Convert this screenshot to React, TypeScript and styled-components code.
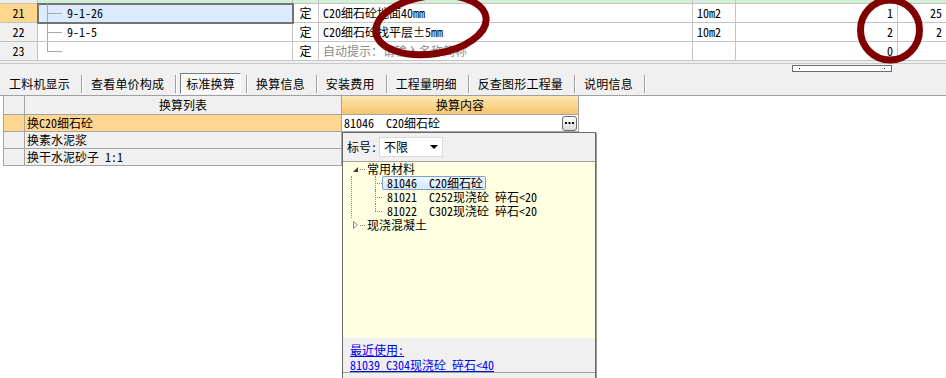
import styled, { createGlobalStyle, css } from "styled-components";

const FONT = `"Noto Sans Mono CJK SC", "Noto Sans CJK SC", "Liberation Mono", monospace`;

const GlobalStyle = createGlobalStyle`
    html, body {
        margin: 0;
        padding: 0;
    }
    body {
        font-family: ${FONT};
        font-size: 12px;
        line-height: 14px;
        color: #000000;
        background: #f0f0f0;
        overflow: hidden;
    }
    * {
        box-sizing: border-box;
    }
`;

const Page = styled.div`
    position: relative;
    width: 946px;
    height: 378px;
    overflow: hidden;
    display: flex;
    flex-direction: column;
    background: #f0f0f0;
`;

/* ---------- top grid ---------- */
const Grid = styled.div`
    display: grid;
    grid-template-columns: 38px 255px 26px 374px 43px 162px 49px;
    background: #ffffff;
`;

const StubCell = styled.div<{ $num?: boolean }>`
    height: 4px;
    border-right: 1px solid #c4c4c4;
    border-bottom: 1px solid #c4c4c4;
    background: ${(p) => (p.$num ? "#ececec" : "#d3f0d6")};
`;

const Cell = styled.div<{
    $align?: "left" | "center" | "right";
    $muted?: boolean;
}>`
    height: 19px;
    padding: 0 4px;
    display: flex;
    align-items: center;
    justify-content: ${(p) =>
        p.$align === "center" ? "center" : p.$align === "right" ? "flex-end" : "flex-start"};
    border-right: 1px solid #c4c4c4;
    border-bottom: 1px solid #c4c4c4;
    white-space: pre;
    overflow: hidden;
    color: ${(p) => (p.$muted ? "#8a8a8a" : "#000000")};
`;

const NumCell = styled(Cell)<{ $active?: boolean }>`
    justify-content: center;
    background: ${(p) => (p.$active ? "#ffd68c" : "#f0f0f0")};
`;

const CodeCell = styled(Cell)<{ $selected?: boolean }>`
    position: relative;
    ${(p) =>
        p.$selected &&
        css`
            background: #dcebfd;
            outline: 2px solid #737373;
            outline-offset: -1px;
            z-index: 1;
        `}
`;

const Branch = styled.span<{ $last?: boolean }>`
    position: relative;
    align-self: stretch;
    flex: none;
    width: 15px;
    margin: 0 5px 0 5px;
    &::before {
        content: "";
        position: absolute;
        left: 0;
        top: -1px;
        bottom: ${(p) => (p.$last ? "50%" : "-1px")};
        border-left: 1px solid #a8a8a8;
    }
    &::after {
        content: "";
        position: absolute;
        left: 0;
        right: 0;
        top: 50%;
        border-top: 1px solid #a8a8a8;
    }
`;

/* ---------- scroll strip ---------- */
const ScrollStrip = styled.div`
    padding-top: 2px;
`;

const ScrollTrack = styled.div`
    height: 9px;
    padding-top: 1px;
    border-top: 1px solid #c8c8c8;
`;

const ScrollThumb = styled.div`
    margin-left: 792px;
    width: 100px;
    height: 7px;
    border: 1px solid #6e6e6e;
    background: #ffffff;
    display: flex;
    align-items: center;
    justify-content: space-between;
    padding: 0 6px;
`;

const Dot = styled.span`
    width: 1px;
    height: 1px;
    background: #000080;
`;

/* ---------- tabs ---------- */
const TabBar = styled.div`
    height: 24px;
    display: flex;
    align-items: center;
    border-bottom: 1px solid #a0a0a0;
    background: #f0f0f0;
`;

const Tab = styled.div<{ $active?: boolean }>`
    height: 21px;
    display: flex;
    align-items: center;
    padding: 0 11px 0 9px;
    letter-spacing: 0.2px;
    white-space: nowrap;
    ${(p) =>
        p.$active &&
        css`
            margin: 0 5px 0 4px;
            padding: 0 5px;
            border: 1px solid;
            border-color: #7a7a7a #ffffff #ffffff #7a7a7a;
            background: #f8f8f8;
        `}
`;

const TabSep = styled.span`
    flex: none;
    width: 1px;
    height: 18px;
    background: #a0a0a0;
    box-shadow: 1px 0 0 #ffffff;
`;

/* ---------- lower panel ---------- */
const Lower = styled.div`
    position: relative;
    flex: 1;
    background: #ffffff;
    padding-left: 3px;
`;

const SwapTable = styled.div`
    display: grid;
    grid-template-columns: 21px 317px 237px;
    width: max-content;
    border-left: 1px solid #a4a4a4;
`;

const HeadCell = styled.div<{ $orange?: boolean }>`
    height: 19px;
    display: flex;
    align-items: center;
    justify-content: center;
    border-right: 1px solid #a4a4a4;
    border-bottom: 1px solid #a4a4a4;
    background: ${(p) =>
        p.$orange ? "linear-gradient(#fde6b2, #f6c76c)" : "#f0f0f0"};
`;

const BodyCell = styled.div<{ $tone: "selected" | "gray" | "white" }>`
    height: 17px;
    display: flex;
    align-items: center;
    justify-content: space-between;
    padding: 0 1px 0 2px;
    white-space: pre;
    border-right: 1px solid #a4a4a4;
    border-bottom: 1px solid #a4a4a4;
    background: ${(p) =>
        p.$tone === "selected" ? "#ffd68f" : p.$tone === "gray" ? "#f0f0f0" : "#ffffff"};
`;

const MoreButton = styled.span`
    width: 15px;
    height: 15px;
    border: 1px solid #6c6c6c;
    border-radius: 3px;
    background: linear-gradient(#ffffff, #dcdcdc);
    display: flex;
    align-items: center;
    justify-content: center;
`;

/* ---------- popup ---------- */
const Popup = styled.div`
    position: absolute;
    left: 342px;
    top: 36px;
    width: 254px;
    height: 260px;
    border: 1px solid #6a6a6a;
    box-shadow: 1px 1px 0 #9a9a9a;
    background: #f0f0f0;
    display: flex;
    flex-direction: column;
`;

const PopupHead = styled.div`
    height: 29px;
    flex: none;
    display: flex;
    align-items: center;
    gap: 2px;
    padding-left: 4px;
    border-bottom: 1px solid #a0a0a0;
`;

const Select = styled.div`
    width: 64px;
    height: 20px;
    display: flex;
    align-items: center;
    justify-content: space-between;
    padding: 0 4px;
    background: #ffffff;
    border: 1px solid #dadada;
`;

const TreePane = styled.div`
    height: 176px;
    flex: none;
    background: #ffffe1;
    padding-left: 8px;
`;

const TreeRow = styled.div`
    height: 14px;
    display: flex;
    align-items: center;
    white-space: pre;
    line-height: 12px;
`;

const Expander = styled.span`
    width: 9px;
    flex: none;
    display: flex;
    justify-content: center;
`;

const Connector = styled.span<{ $w: number }>`
    flex: none;
    width: ${(p) => p.$w}px;
    border-top: 1px dotted #8a8a8a;
`;

const NodeLabel = styled.span`
    margin-left: 2px;
`;

const ChildList = styled.div`
    border-left: 1px dotted #8a8a8a;
    padding-left: 23px;
`;

const ChildRow = styled(TreeRow)<{ $last?: boolean }>`
    position: relative;
    &::before {
        content: "";
        position: absolute;
        left: 0;
        top: 0;
        bottom: ${(p) => (p.$last ? "50%" : "0")};
        border-left: 1px dotted #8a8a8a;
    }
`;

const Item = styled.span<{ $selected?: boolean }>`
    height: 14px;
    display: flex;
    align-items: center;
    padding: 0 2px 0 4px;
    border: 1px solid transparent;
    border-radius: 2px;
    ${(p) =>
        p.$selected &&
        css`
            border-color: #7da2ce;
            background: linear-gradient(#eef6fe, #d6e8fb);
        `}
`;

const PopupFoot = styled.div`
    height: 35px;
    flex: none;
    padding: 4px 0 0 7px;
    border-bottom: 1px solid #a0a0a0;
    line-height: 15px;
`;

const Link = styled.div`
    height: 15px;
    color: #0000ee;
    text-decoration: underline;
    white-space: pre;
`;

/* ---------- annotations ---------- */
const Annotation = styled.svg`
    position: absolute;
    left: 0;
    top: 0;
    pointer-events: none;
    z-index: 10;
`;

const rows = [
    { no: "21", code: "9-1-26", name: "C20细石砼地面40mm", unit: "10m2", qty: "1", extra: "25", active: true },
    { no: "22", code: "9-1-5", name: "C20细石砼找平层±5mm", unit: "10m2", qty: "2", extra: "2" },
    { no: "23", code: "", name: "自动提示：请输入名称简称", unit: "", qty: "0", extra: "", muted: true, last: true },
];

const tabs = ["工料机显示", "查看单价构成", "标准换算", "换算信息", "安装费用", "工程量明细", "反查图形工程量", "说明信息"];

const swaps = [
    { label: "换C20细石砼", content: "81046  C20细石砼", selected: true },
    { label: "换素水泥浆", content: "" },
    { label: "换干水泥砂子 1:1", content: "" },
];

const materials = [
    { text: "81046  C20细石砼", selected: true },
    { text: "81021  C252现浇砼 碎石<20" },
    { text: "81022  C302现浇砼 碎石<20" },
];

const App = () => {
    return (
        <>
            <GlobalStyle />
            <Page>
                <Grid>
                    <StubCell $num />
                    {[0, 1, 2, 3, 4, 5].map((i) => (
                        <StubCell key={i} />
                    ))}
                    {rows.map((r) => (
                        <>
                            <NumCell key={r.no + "n"} $active={r.active}>
                                {r.no}
                            </NumCell>
                            <CodeCell key={r.no + "c"} $selected={r.active}>
                                <Branch $last={r.last} />
                                {r.code}
                            </CodeCell>
                            <Cell key={r.no + "d"} $align="center">
                                定
                            </Cell>
                            <Cell key={r.no + "m"} $muted={r.muted}>
                                {r.name}
                            </Cell>
                            <Cell key={r.no + "u"}>{r.unit}</Cell>
                            <Cell key={r.no + "q"} $align="right">
                                {r.qty}
                            </Cell>
                            <Cell key={r.no + "e"} $align="right">
                                {r.extra}
                            </Cell>
                        </>
                    ))}
                </Grid>

                <ScrollStrip>
                    <ScrollTrack>
                        <ScrollThumb>
                            <Dot />
                            <Dot />
                        </ScrollThumb>
                    </ScrollTrack>
                </ScrollStrip>

                <TabBar>
                    {tabs.map((t) => (
                        <>
                            <Tab key={t} $active={t === "标准换算"}>
                                {t}
                            </Tab>
                            <TabSep key={t + "s"} />
                        </>
                    ))}
                </TabBar>

                <Lower>
                    <SwapTable>
                        <HeadCell />
                        <HeadCell>换算列表</HeadCell>
                        <HeadCell $orange>换算内容</HeadCell>
                        {swaps.map((s) => (
                            <>
                                <BodyCell key={s.label + "h"} $tone={s.selected ? "selected" : "gray"} />
                                <BodyCell key={s.label} $tone={s.selected ? "selected" : "gray"}>
                                    {s.label}
                                </BodyCell>
                                <BodyCell key={s.label + "c"} $tone="white">
                                    <span>{s.content}</span>
                                    {s.selected && (
                                        <MoreButton>
                                            <svg width="9" height="3" viewBox="0 0 9 3">
                                                <rect x="0" y="0" width="2" height="2" fill="#000" />
                                                <rect x="3.5" y="0" width="2" height="2" fill="#000" />
                                                <rect x="7" y="0" width="2" height="2" fill="#000" />
                                            </svg>
                                        </MoreButton>
                                    )}
                                </BodyCell>
                            </>
                        ))}
                    </SwapTable>

                    <Popup>
                        <PopupHead>
                            <span>标号:</span>
                            <Select>
                                <span>不限</span>
                                <svg width="8" height="4" viewBox="0 0 8 4">
                                    <polygon points="0,0 8,0 4,4" fill="#000" />
                                </svg>
                            </Select>
                        </PopupHead>
                        <TreePane>
                            <TreeRow>
                                <Expander>
                                    <svg width="5" height="5" viewBox="0 0 5 5">
                                        <polygon points="5,0 5,5 0,5" fill="#3c3c3c" />
                                    </svg>
                                </Expander>
                                <Connector $w={5} />
                                <NodeLabel>常用材料</NodeLabel>
                            </TreeRow>
                            <ChildList>
                                {materials.map((m, i) => (
                                    <ChildRow key={m.text} $last={i === materials.length - 1}>
                                        <Connector $w={7} />
                                        <Item $selected={m.selected}>{m.text}</Item>
                                    </ChildRow>
                                ))}
                            </ChildList>
                            <TreeRow>
                                <Expander>
                                    <svg width="5" height="8" viewBox="0 0 5 8">
                                        <polygon points="0.5,0.5 4.5,4 0.5,7.5" fill="#ffffff" stroke="#8a8a8a" />
                                    </svg>
                                </Expander>
                                <Connector $w={5} />
                                <NodeLabel>现浇混凝土</NodeLabel>
                            </TreeRow>
                        </TreePane>
                        <PopupFoot>
                            <Link>最近使用:</Link>
                            <Link>81039 C304现浇砼 碎石&lt;40</Link>
                        </PopupFoot>
                    </Popup>
                </Lower>

                <Annotation width="946" height="378" viewBox="0 0 946 378">
                    <ellipse
                        cx="431"
                        cy="25"
                        rx="55.5"
                        ry="29"
                        transform="rotate(-8 431 25)"
                        fill="none"
                        stroke="#800000"
                        strokeWidth="7"
                    />
                    <ellipse cx="890" cy="30" rx="29.5" ry="30" fill="none" stroke="#800000" strokeWidth="7" />
                </Annotation>
            </Page>
        </>
    );
};

export default App;
